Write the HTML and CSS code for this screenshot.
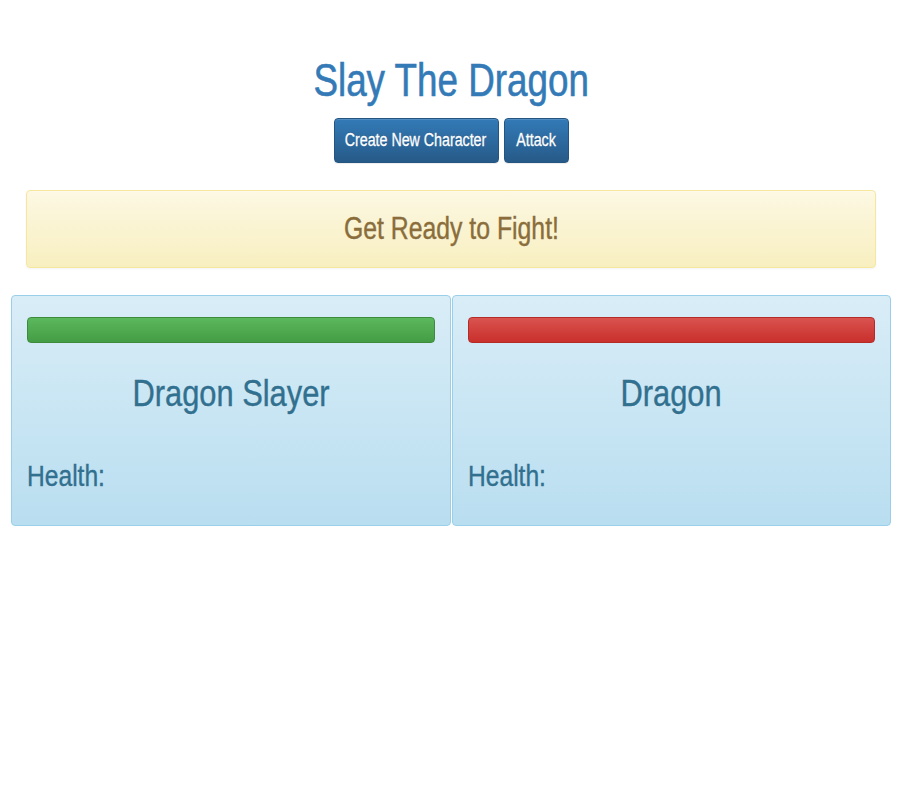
FILE: index.html
```html
<!DOCTYPE html>
<html lang="en">
<head>
    <meta charset="UTF-8">
    <meta name="viewport" content="width=device-width, initial-scale=1.0">
    <title>Slay The Dragon</title>
    <link rel="stylesheet" href="styles.css">
</head>
<body>
    <div class="container">
        <h1 class="title"><span class="narrow">Slay The Dragon</span></h1>
        <div class="actions">
            <button class="btn btn-create"><span class="narrow">Create New Character</span></button>
            <button class="btn btn-attack"><span class="narrow">Attack</span></button>
        </div>
        <div class="alert"><span class="narrow">Get Ready to Fight!</span></div>
        <div class="fighters">
            <div class="card">
                <div class="bar bar-green"></div>
                <h2 class="name"><span class="narrow">Dragon Slayer</span></h2>
                <h3 class="health"><span class="narrow">Health:</span></h3>
            </div>
            <div class="card">
                <div class="bar bar-red"></div>
                <h2 class="name"><span class="narrow">Dragon</span></h2>
                <h3 class="health"><span class="narrow">Health:</span></h3>
            </div>
        </div>
    </div>
</body>
</html>
```

FILE: styles.css
```css
body {
    margin: 0;
    padding: 0 9px 0 11px;
    font-family: "Liberation Sans", Arial, sans-serif;
    background: #fff;
}
.container {
    display: flex;
    flex-direction: column;
}
/* the fonts in this design are condensed */
.narrow {
    display: inline-block;
    white-space: nowrap;
    transform: scaleX(0.8);
    -webkit-text-stroke: 0.4px currentColor;
}
.title {
    margin: 56px 0 0;
    font-size: 46px;
    line-height: 48px;
    font-weight: normal;
    text-align: center;
    color: #337ab7;
}
.title .narrow {
    -webkit-text-stroke: 0.6px currentColor;
}
.actions {
    display: flex;
    justify-content: center;
    gap: 5px;
    margin-top: 14px;
}
.btn {
    display: inline-flex;
    justify-content: center;
    padding: 9px 0 10px;
    font-family: inherit;
    font-size: 18px;
    line-height: 24px;
    color: #fff;
    background-image: linear-gradient(to bottom, #337ab7 0%, #265a88 100%);
    border: 1px solid #245580;
    border-radius: 4px;
    text-shadow: 0 -1px 0 rgba(0, 0, 0, 0.2);
    box-shadow: inset 0 1px 0 rgba(255, 255, 255, 0.15), 0 1px 1px rgba(0, 0, 0, 0.075);
    cursor: pointer;
}
.btn .narrow {
    flex-shrink: 0;
    transform: scaleX(0.79);
    -webkit-text-stroke: 0.3px currentColor;
}
.btn-create {
    width: 165px;
}
.btn-attack {
    width: 65px;
}
.alert {
    margin: 27px 15px 0;
    padding: 22px 15px;
    font-size: 31px;
    line-height: 32px;
    text-align: center;
    color: #8a6d3b;
    background-image: linear-gradient(to bottom, #fcf8e3 0%, #f8efc0 100%);
    border: 1px solid #f5e79e;
    border-radius: 4px;
    text-shadow: 0 1px 0 rgba(255, 255, 255, 0.2);
    box-shadow: inset 0 1px 0 rgba(255, 255, 255, 0.25), 0 1px 2px rgba(0, 0, 0, 0.05);
}
.fighters {
    display: grid;
    grid-template-columns: 1fr 1fr;
    gap: 1px;
    margin-top: 27px;
}
.card {
    padding: 21px 15px 33px;
    color: #31708f;
    background-image: linear-gradient(to bottom, #d9edf7 0%, #b9def0 100%);
    border: 1px solid #9acfea;
    border-radius: 4px;
    text-shadow: 0 1px 0 rgba(255, 255, 255, 0.2);
}
.bar {
    height: 24px;
    border-radius: 4px;
}
.bar-green {
    background-image: linear-gradient(to bottom, #5cb85c 0%, #449d44 100%);
    border: 1px solid #3d8b3d;
}
.bar-red {
    background-image: linear-gradient(to bottom, #d9534f 0%, #c9302c 100%);
    border: 1px solid #b52b27;
}
.name {
    margin: 31px 0 0;
    font-size: 36px;
    line-height: 40px;
    font-weight: normal;
    text-align: center;
}
.name .narrow {
    transform: scaleX(0.856);
}
.health {
    margin: 45px 0 0;
    font-size: 30px;
    line-height: 33px;
    font-weight: normal;
}
.health .narrow {
    transform: scaleX(0.82);
    transform-origin: left center;
}
```
